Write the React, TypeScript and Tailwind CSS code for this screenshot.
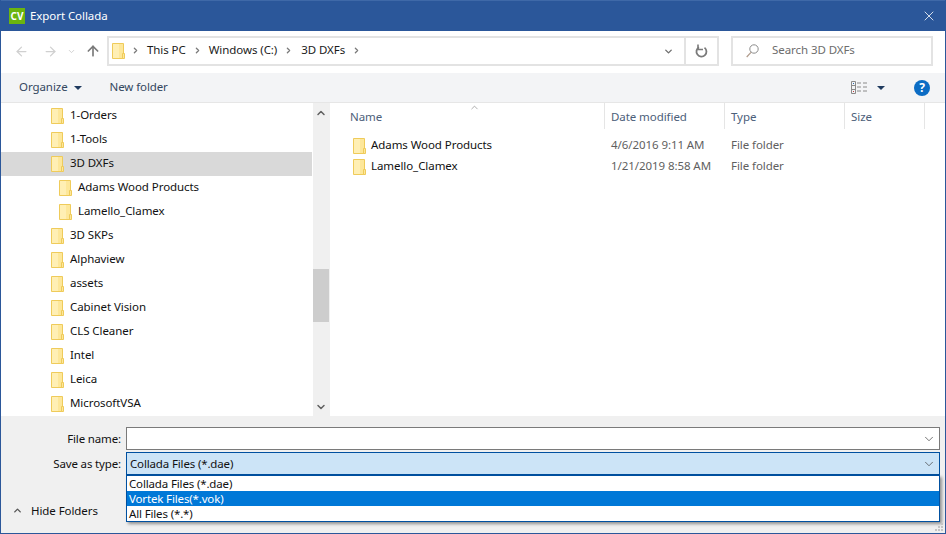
import { ArrowLeft, ArrowRight, ArrowUp, ChevronDown, ChevronRight, ChevronUp, X } from "lucide-react";

const FONT = "font-['Noto_Sans','Open_Sans',sans-serif]";

const treeItems = [
  { name: "1-Orders", depth: 0 },
  { name: "1-Tools", depth: 0 },
  { name: "3D DXFs", depth: 0, selected: true },
  { name: "Adams Wood Products", depth: 1 },
  { name: "Lamello_Clamex", depth: 1 },
  { name: "3D SKPs", depth: 0 },
  { name: "Alphaview", depth: 0 },
  { name: "assets", depth: 0 },
  { name: "Cabinet Vision", depth: 0 },
  { name: "CLS Cleaner", depth: 0 },
  { name: "Intel", depth: 0 },
  { name: "Leica", depth: 0 },
  { name: "MicrosoftVSA", depth: 0 },
];

const files = [
  { name: "Adams Wood Products", date: "4/6/2016 9:11 AM" },
  { name: "Lamello_Clamex", date: "1/21/2019 8:58 AM" },
];

// plain closed folder, same drawing everywhere
const FolderIcon = () => (
  <svg width="13" height="16" viewBox="0 0 13 16" className="shrink-0">
    <path d="M.5.5h11v15H.5z" fill="#fde79a" stroke="#efcb5a" />
    <path d="M1 1h6v14H1z" fill="#ffefb4" />
    <path d="M10.5 10.5h2v5h-2z" fill="#fde79a" stroke="#efcb5a" />
  </svg>
);

const Crumb = ({ label }: { label: string }) => (
  <>
    <span className="text-[11.5px] text-[#1a1a1a] leading-none">{label}</span>
    <ChevronRight className="w-[9px] h-[9px] text-[#7a7a7a]" strokeWidth={3.5} />
  </>
);

const Column = ({ label, width }: { label: string; width: string }) => (
  <div className={`${width} h-[26px] pl-[6px] pt-px flex items-center border-r border-[#e5e5e5] text-[11.5px] text-[#4c607a]`}>
    {label}
  </div>
);

export default function App() {
  return (
    <div className={`${FONT} tracking-[-0.07px] relative w-[946px] h-[534px] flex flex-col overflow-hidden bg-[#f0f0f0] border-x border-b border-[#2b579a]`}>
      {/* Title bar */}
      <div className="h-[31px] shrink-0 -mx-px bg-[#2b579a] flex items-center pl-[9px] pr-[9px] border-t border-[#3f69a8]">
        <div className="w-4 h-4 bg-[#6bb40f] text-white text-[10px] font-bold flex items-center justify-center leading-none">CV</div>
        <span className="ml-[5px] -mt-px text-[11.5px] text-white">Export Collada</span>
        <X className="ml-auto w-[16px] h-[16px] text-white" strokeWidth={1.2} />
      </div>

      {/* Nav row */}
      <div className="h-[42px] shrink-0 bg-white flex items-center pb-[2px]">
        <div className="w-[106px] flex items-center pl-[13px]">
          <ArrowLeft className="w-[15px] h-[15px] text-[#d0d0d0]" strokeWidth={2} />
          <ArrowRight className="ml-[14px] w-[15px] h-[15px] text-[#d0d0d0]" strokeWidth={2} />
          <ChevronDown className="ml-[9px] w-[9px] h-[9px] text-[#d0d0d0]" strokeWidth={2.5} />
          <ArrowUp className="ml-[9px] w-[16px] h-[16px] text-[#7a7a7a]" strokeWidth={2.5} />
        </div>
        <div className="w-[612px] h-[30px] border-2 border-[#e3e3e3] flex items-center">
          <div className="ml-[3px]"><FolderIcon /></div>
          <div className="ml-[6px] -mt-[2px] flex items-center gap-[7px]">
            <ChevronRight className="w-[9px] h-[9px] text-[#7a7a7a]" strokeWidth={3.5} />
            <span className="text-[11.5px] text-[#1a1a1a] leading-none">This PC</span>
            <ChevronRight className="w-[9px] h-[9px] text-[#7a7a7a]" strokeWidth={3.5} />
            <Crumb label="Windows (C:)" />
            <span className="ml-px text-[11.5px] text-[#1a1a1a] leading-none">3D DXFs</span>
            <ChevronRight className="w-[9px] h-[9px] text-[#7a7a7a]" strokeWidth={3.5} />
          </div>
          <ChevronDown className="ml-auto mr-[10px] w-[11px] h-[11px] text-[#6f6f6f]" strokeWidth={3} />
          <div className="w-[33px] h-full border-l-2 border-[#e3e3e3] flex items-center justify-center">
            <svg width="13" height="14" viewBox="0 0 13 14" fill="none" className="text-[#7a7a7a]">
              <path d="M4 3.2A5 5 0 1 0 9.5 3.6" stroke="currentColor" strokeWidth="1.8" />
              <path d="M3 .5v5h5" stroke="currentColor" strokeWidth="1.6" />
            </svg>
          </div>
        </div>
        <div className="ml-[12px] w-[202px] h-[30px] border-2 border-[#e3e3e3] flex items-center pl-[13px]">
          <svg width="13" height="14" viewBox="0 0 13 14" fill="none" className="shrink-0">
            <circle cx="8" cy="5" r="4.2" stroke="#8c8c8c" />
            <path d="M5 8.3.7 13" stroke="#b09a8a" strokeWidth="1.2" />
          </svg>
          <span className="ml-[13px] -mt-[2px] text-[11.5px] text-[#6d6d6d]">Search 3D DXFs</span>
        </div>
      </div>

      {/* Toolbar */}
      <div className="h-[30px] shrink-0 bg-[#f3f4f6] border-b border-[#e6e6e6] flex items-center pl-[18px] pr-[15px]">
        <span className="-mt-px text-[11.5px] text-[#33475f]">Organize</span>
        <div className="ml-[6px] w-0 h-0 border-x-[4px] border-x-transparent border-t-[4px] border-t-[#1f3a5f]" />
        <span className="ml-[28px] -mt-px text-[11.5px] text-[#33475f] tracking-[-0.1px]">New folder</span>
        <svg width="16" height="13" viewBox="0 0 16 13" className="ml-auto">
          <path d="M.5.5h4v12h-4zM.5 4.5h4M.5 8.5h4" fill="none" stroke="#8a8a8a" />
          <path d="M6 2h4M12 2h4M6 6h4M12 6h4M6 10h4M12 10h4" stroke="#8a8a8a" />
          <rect x="2" y="2" width="1" height="1" fill="#2b6cb0" />
          <rect x="2" y="10" width="1" height="1" fill="#c43b3b" />
        </svg>
        <div className="ml-[10px] w-0 h-0 border-x-[4px] border-x-transparent border-t-[4px] border-t-[#1f3a5f]" />
        <div className="ml-[29px] w-4 h-4 rounded-full bg-[#0b6cc4] text-white text-[12px] font-bold flex items-center justify-center leading-none">?</div>
      </div>

      {/* Main panes */}
      <div className="h-[313px] shrink-0 bg-white flex">
        <div className="w-[311px] pt-px">
          {treeItems.map((item) => (
            <div
              key={item.name}
              className={`h-[24px] flex items-center text-[11.5px] text-[#111] ${item.selected ? "bg-[#d9d9d9]" : ""} ${item.depth ? "pl-[58px]" : "pl-[50px]"}`}
            >
              <FolderIcon />
              <span className="ml-[6px] -mt-[2px]">{item.name}</span>
            </div>
          ))}
        </div>
        <div className="w-[16px] ml-px bg-[#f0f0f0] flex flex-col items-center justify-between relative">
          <ChevronUp className="mt-[4px] w-[12px] h-[12px] text-[#606060]" strokeWidth={3} />
          <div className="absolute top-[166px] left-0 w-full h-[53px] bg-[#cdcdcd]" />
          <ChevronDown className="mb-[3px] w-[12px] h-[12px] text-[#606060]" strokeWidth={3} />
        </div>
        <div className="flex-1 relative pl-[14px] border-l border-[#f0f0f0]">
          <ChevronUp className="absolute left-[139px] -top-[1px] w-[11px] h-[11px] text-[#8a8a8a]" strokeWidth={1.5} />
          <div className="flex">
            <Column label="Name" width="w-[261px]" />
            <Column label="Date modified" width="w-[120px]" />
            <Column label="Type" width="w-[120px]" />
            <Column label="Size" width="w-[80px]" />
          </div>
          <div className="mt-[6px] ml-[9px]">
            {files.map((file) => (
              <div key={file.name} className="h-[21px] flex items-center text-[11.5px]">
                <div className="w-[258px] flex items-center text-[#111]">
                  <FolderIcon />
                  <span className="ml-[5px] -mt-px">{file.name}</span>
                </div>
                <span className="w-[120px] -mt-px text-[#5f5f5f]">{file.date}</span>
                <span className="-mt-px text-[#5f5f5f]">File folder</span>
              </div>
            ))}
          </div>
        </div>
      </div>

      {/* Bottom form */}
      <div className="flex-1 flex flex-col pt-[11px] pr-[5px]">
        <div className="flex items-center h-[23px]">
          <span className="w-[120px] text-right text-[11.5px] text-[#111] tracking-[-0.15px]">File name:</span>
          <div className="ml-[5px] flex-1 h-full bg-white border border-[#7a7a7a] flex items-center justify-end pr-[3px]">
            <ChevronDown className="w-[14px] h-[14px] text-[#444]" strokeWidth={1.25} />
          </div>
        </div>
        <div className="mt-[2px] flex items-center h-[23px]">
          <span className="w-[120px] text-right text-[11.5px] text-[#111] tracking-[-0.15px]">Save as type:</span>
          <div className="ml-[5px] flex-1 h-full bg-[#cce4f7] border border-[#0050a0] flex items-center pl-[3px] pr-[3px] text-[11.5px] text-[#111] tracking-[-0.15px]">
            Collada Files (*.dae)
            <ChevronDown className="ml-auto w-[14px] h-[14px] text-[#444]" strokeWidth={1.25} />
          </div>
        </div>
        <div className="mt-[27px] ml-[11px] flex items-center text-[11.5px] text-[#111]">
          <ChevronUp className="w-[11px] h-[11px] text-[#555]" strokeWidth={3} />
          <span className="ml-[8px]">Hide Folders</span>
        </div>
      </div>

      {/* Open combo list */}
      <div className="absolute left-[125px] top-[475px] w-[814px] h-[47px] bg-white border border-[#0050a0] shadow-[2px_2px_3px_rgba(0,0,0,0.4)] text-[11.5px] text-[#111] tracking-[-0.15px]">
        <div className="h-[15px] pl-[2px] flex items-center">Collada Files (*.dae)</div>
        <div className="h-[15px] pl-[2px] flex items-center bg-[#0078d7] text-white">Vortek Files(*.vok)</div>
        <div className="h-[15px] pl-[2px] flex items-center">All Files (*.*)</div>
      </div>

      {/* Resize grip */}
      <svg width="9" height="9" viewBox="0 0 9 9" className="absolute right-[1px] bottom-[1px]">
        <path d="M6 0h2v2H6zM3 3h2v2H3zM6 3h2v2H6zM0 6h2v2H0zM3 6h2v2H3zM6 6h2v2H6z" fill="#c4c4c4" />
      </svg>
    </div>
  );
}
